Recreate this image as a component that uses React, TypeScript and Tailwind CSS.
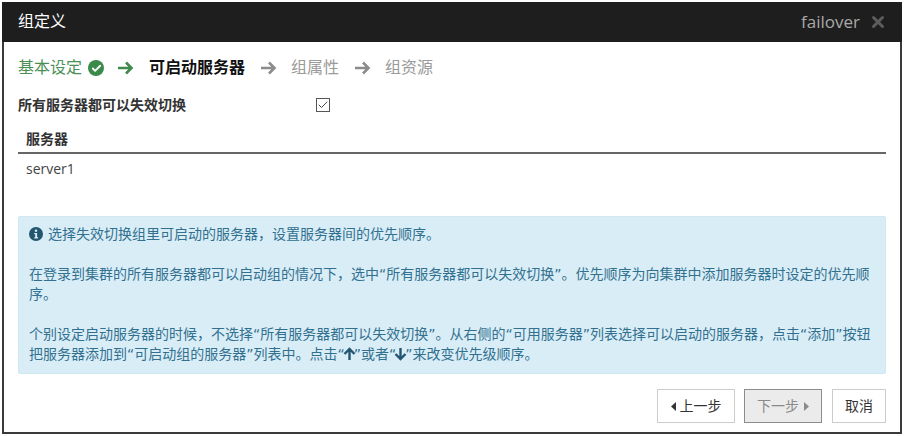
import { Check, X } from "lucide-react";

const CJK = "font-['Liberation_Sans','Noto_Sans_CJK_SC',sans-serif]";

function StepArrow({ color }: { color: string }) {
  return (
    <svg width="16" height="14" viewBox="0 0 16 14" className="shrink-0">
      <path d="M0 7h13.5M8 1.5 13.5 7 8 12.5" fill="none" stroke={color} strokeWidth="2.6" />
    </svg>
  );
}

function Steps() {
  return (
    <div className="flex items-center h-[24px] text-[16px]">
      <span className="text-[#4a8f55] w-[64px]">基本设定</span>
      <span className="ml-[6px] flex size-[16px] items-center justify-center rounded-full bg-[#3c8a4a]">
        <Check size={11} strokeWidth={4} className="text-white" />
      </span>
      <span className="ml-[14px]"><StepArrow color="#3f8a4c" /></span>
      <span className="ml-[15px] w-[96px] font-bold text-[#111]">可启动服务器</span>
      <span className="ml-[16px]"><StepArrow color="#8c8c8c" /></span>
      <span className="ml-[14px] w-[48px] text-[#9a9a9a]">组属性</span>
      <span className="ml-[16px]"><StepArrow color="#8c8c8c" /></span>
      <span className="ml-[14px] w-[48px] text-[#9a9a9a]">组资源</span>
    </div>
  );
}

function InfoDot() {
  return (
    <svg width="14" height="14" viewBox="0 0 14 14" className="shrink-0">
      <circle cx="7" cy="7" r="7" fill="#24566f" />
      <rect x="5.9" y="2.6" width="2.2" height="2.2" fill="#d9edf7" />
      <path d="M5.2 6h2.9v4.2h1v1.2H5.2v-1.2h1V7.2h-1z" fill="#d9edf7" />
    </svg>
  );
}

function UpArrow() {
  return (
    <svg width="13" height="14" viewBox="0 0 13 14" className="-mx-[2px] inline-block align-[-2px]">
      <path d="M6.5 13V2M1.5 7l5-5 5 5" fill="none" stroke="#24566f" strokeWidth="2.4" />
    </svg>
  );
}

function DownArrow() {
  return (
    <svg width="13" height="14" viewBox="0 0 13 14" className="-mx-[2px] inline-block align-[-2px]">
      <path d="M6.5 1v11M1.5 7l5 5 5-5" fill="none" stroke="#24566f" strokeWidth="2.4" />
    </svg>
  );
}

function Caret({ dir }: { dir: "left" | "right" }) {
  return (
    <svg width="5" height="9" viewBox="0 0 5 9" className="shrink-0">
      <path d={dir === "left" ? "M5 0v9L0 4.5z" : "M0 0v9l5-4.5z"} fill="currentColor" />
    </svg>
  );
}

export default function App() {
  return (
    <div className={`h-[436px] w-[904px] bg-white pt-[2px] pl-[2px] pr-[2px] ${CJK}`}>
      <div className="flex h-[432px] flex-col border-x-2 border-b-2 border-[#3a3a3a] bg-white">
        <div className="flex h-[40px] shrink-0 items-center justify-between bg-[#1e1e1e] pl-[14px] pr-[15px] -mx-[2px]">
          <span className="text-[16px] text-white pl-[2px]">组定义</span>
          <div className="flex items-center gap-[9px]">
            <span className="text-[17px] text-[#a9a9a9] font-['Open_Sans',sans-serif]">failover</span>
            <X size={18} strokeWidth={4} className="text-[#5c5c5c]" />
          </div>
        </div>

        <div className="flex flex-1 flex-col px-[14px] pt-[14px]">
          <Steps />

          <div className="mt-[15px] flex h-[20px] items-center">
            <span className="w-[298px] text-[14px] font-bold text-[#333]">所有服务器都可以失效切换</span>
            <span className="flex size-[14px] items-center justify-center border border-[#555] bg-white">
              <Check size={12} strokeWidth={1.8} className="text-[#333]" />
            </span>
          </div>

          <div className="mt-[15px] flex h-[24px] items-center border-b-2 border-[#666] pl-[8px] pb-[4px] text-[14px] font-bold text-[#333]">
            服务器
          </div>
          <div className="flex h-[28px] items-center pl-[8px] text-[14px] text-[#444] font-['Open_Sans',sans-serif]">
            server1
          </div>

          <div className="mt-[34px] h-[158px] rounded-[2px] border border-[#cfe8f1] bg-[#d9edf7] pl-[10px] pr-[14px] pt-[7px] font-['DejaVu_Sans','Noto_Sans_CJK_SC',sans-serif] text-[14px] leading-[20px] text-[#31708f]">
            <p className="flex items-center gap-[5px]">
              <InfoDot />
              选择失效切换组里可启动的服务器，设置服务器间的优先顺序。
            </p>
            <p className="mt-[20px]">
              在登录到集群的所有服务器都可以启动组的情况下，选中“所有服务器都可以失效切换”。优先顺序为向集群中添加服务器时设定的优先顺序。
            </p>
            <p className="mt-[20px]">
              个别设定启动服务器的时候，不选择“所有服务器都可以失效切换”。从右侧的“可用服务器”列表选择可以启动的服务器，点击“添加”按钮把服务器添加到“可启动组的服务器”列表中。点击“<UpArrow />”或者“<DownArrow />”来改变优先级顺序。
            </p>
          </div>

          <div className="mt-[15px] flex justify-end text-[14px]">
            <button className="flex h-[34px] w-[78px] items-center justify-center gap-[4px] border border-[#ccc] bg-white text-[#333]">
              <Caret dir="left" />
              上一步
            </button>
            <button className="ml-[9px] flex h-[34px] w-[78px] items-center justify-center gap-[5px] border border-[#8c8c8c] bg-[#ebebeb] text-[#8a8a8a]">
              下一步
              <Caret dir="right" />
            </button>
            <button className="ml-[10px] flex h-[34px] w-[54px] items-center justify-center border border-[#ccc] bg-white text-[#333]">
              取消
            </button>
          </div>
        </div>
      </div>
    </div>
  );
}
